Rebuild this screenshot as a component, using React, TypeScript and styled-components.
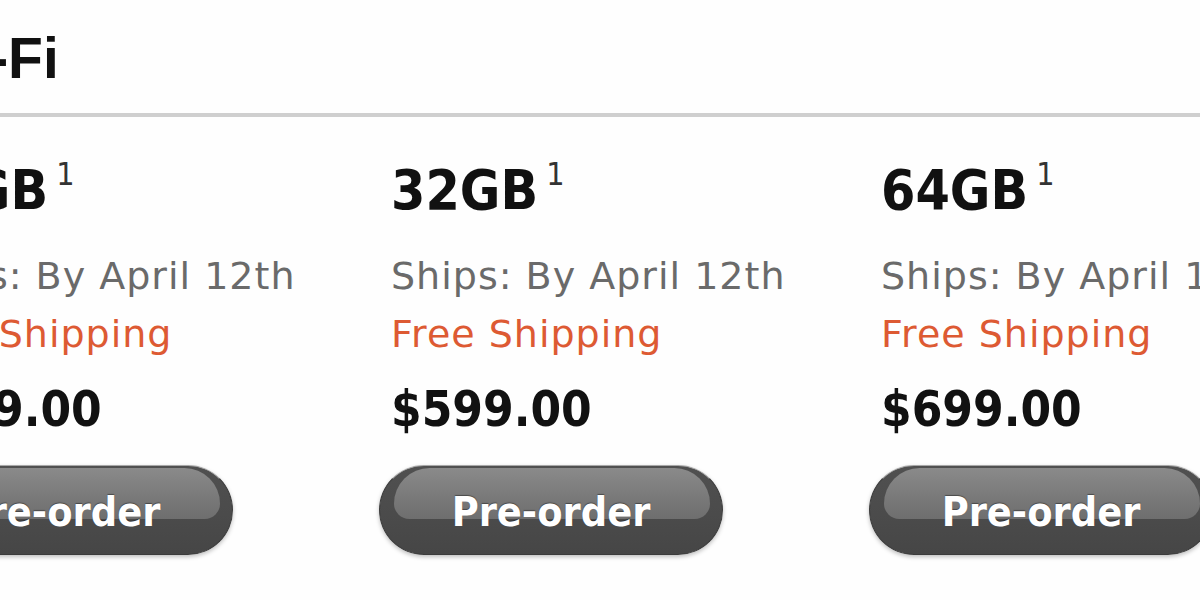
import React from "react";
import styled, { createGlobalStyle } from "styled-components";

const Global = createGlobalStyle`
  html, body { margin: 0; padding: 0; background: #ffffff; }
  body { overflow: hidden; }
`;

const Page = styled.div`
  width: 1200px;
  height: 600px;
  overflow: hidden;
  background: #fefefe;
  display: flex;
  flex-direction: column;
`;

const Heading = styled.h1`
  margin: 30px 0 0 -80px;
  font-family: "Liberation Sans", Arial, sans-serif;
  font-weight: 700;
  font-size: 57px;
  line-height: 57px;
  color: #111;
  white-space: nowrap;
`;

const Rule = styled.hr`
  margin: 26px 0 0 0;
  border: none;
  height: 4px;
  background: #cfcfcf;
  width: 100%;
`;

const Columns = styled.div`
  display: grid;
  grid-template-columns: repeat(3, 490px);
  margin-left: -99px;
  margin-top: 46px;
`;

const Column = styled.div`
  display: flex;
  flex-direction: column;
  align-items: flex-start;
  font-family: "DejaVu Sans Condensed", "DejaVu Sans", sans-serif;
  white-space: nowrap;
`;

const Capacity = styled.div`
  font-family: "DejaVu Sans Condensed", "DejaVu Sans", sans-serif;
  font-stretch: condensed;
  font-size: 55px;
  line-height: 55px;
  font-weight: 700;
  color: #111;
`;

const Sup = styled.sup`
  font-family: "DejaVu Sans", sans-serif;
  font-size: 32px;
  font-weight: 400;
  color: #333;
  vertical-align: 0;
  position: relative;
  top: -24px;
  margin-left: 8px;
`;

const Ships = styled.div<{ $accent?: boolean }>`
  margin-top: ${(p) => (p.$accent ? "0" : "21px")};
  font-family: "DejaVu Sans", sans-serif;
  font-size: 38px;
  letter-spacing: 1px;
  line-height: 58px;
  color: ${(p) => (p.$accent ? "#dd5a33" : "#6a6a6a")};
`;

const Price = styled.div`
  margin-top: 23px;
  font-family: "DejaVu Sans Condensed", "DejaVu Sans", sans-serif;
  font-stretch: condensed;
  font-size: 49px;
  line-height: 48px;
  font-weight: 700;
  color: #111;
`;

const Button = styled.button`
  position: relative;
  margin: 31px 0 0 -12px;
  width: 344px;
  height: 90px;
  border-radius: 45px;
  border: 1px solid #3c3c3c;
  border-top-color: #a8a8a8;
  background: linear-gradient(#505050 0%, #4b4b4b 55%, #464646 100%);
  box-shadow: 0 2px 4px rgba(0, 0, 0, 0.25);
  padding: 0;
  cursor: pointer;
  font-family: "DejaVu Sans Condensed", "DejaVu Sans", sans-serif;
  font-stretch: condensed;
  font-weight: 700;
  font-size: 41px;
  color: #fff;
  text-shadow: 0 -1px 1px rgba(0, 0, 0, 0.4);
  overflow: hidden;

  &::before {
    content: "";
    position: absolute;
    left: 14px;
    right: 12px;
    top: 2px;
    height: 51px;
    border-radius: 42px 42px 18px 18px;
    background: linear-gradient(#8a8a8a 0%, #7a7a7a 55%, #6e6e6e 100%);
  }
`;

const ButtonLabel = styled.span`
  position: relative;
  display: block;
  line-height: 42px;
  margin-top: 3px;
`;

const items = [
  { cap: "16GB", price: "$499.00" },
  { cap: "32GB", price: "$599.00" },
  { cap: "64GB", price: "$699.00" },
];

export default function App() {
  return (
    <Page>
      <Global />
      <Heading>Wi-Fi</Heading>
      <Rule />
      <Columns>
        {items.map((it) => (
          <Column key={it.cap}>
            <Capacity>
              {it.cap}
              <Sup>1</Sup>
            </Capacity>
            <Ships>Ships: By April 12th</Ships>
            <Ships $accent>Free Shipping</Ships>
            <Price>{it.price}</Price>
            <Button>
              <ButtonLabel>Pre-order</ButtonLabel>
            </Button>
          </Column>
        ))}
      </Columns>
    </Page>
  );
}
